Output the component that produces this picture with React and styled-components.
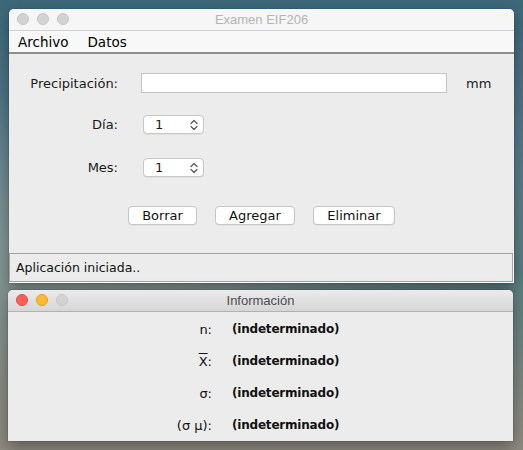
import React from "react";
import styled, { createGlobalStyle } from "styled-components";

const Global = createGlobalStyle`
  html, body { margin: 0; padding: 0; }
  body {
    width: 523px;
    height: 450px;
    overflow: hidden;
    font-family: "DejaVu Sans", "Liberation Sans", sans-serif;
    background:
      radial-gradient(ellipse at 10% 55%, rgba(150,165,160,0.55), rgba(150,165,160,0) 45%),
      radial-gradient(ellipse at 95% 60%, rgba(70,115,120,0.6), rgba(70,115,120,0) 40%),
      linear-gradient(180deg, #3d687a 0%, #54788a 30%, #6f8a8c 55%, #858a83 80%, #8e8a80 100%);
  }
`;

const Desktop = styled.div`
  padding-top: 9px;
`;

const Window = styled.div`
  margin-left: ${p => p.$left}px;
  margin-top: ${p => p.$top || 0}px;
  width: ${p => p.$width}px;
  background: #ececec;
  border-radius: 5px 5px 0 0;
  box-shadow: 0 6px 16px rgba(0, 0, 0, 0.35), 0 0 0 1px rgba(0, 0, 0, 0.08);
  overflow: hidden;
`;

const TitleBar = styled.div`
  position: relative;
  height: 21px;
  display: flex;
  align-items: center;
  justify-content: center;
  background: ${p => (p.$active ? "linear-gradient(#ebebeb, #d6d6d6)" : "#f6f6f6")};
  border-bottom: 1px solid ${p => (p.$active ? "#b1b1b1" : "#d1d1d1")};
  font-family: "Liberation Sans", sans-serif;
  font-size: 13px;
  color: ${p => (p.$active ? "#4d4d4d" : "#b4b4b4")};
`;

const Lights = styled.div`
  position: absolute;
  left: 8px;
  top: 4px;
  display: flex;
  gap: 8px;
`;

const Light = styled.span`
  width: 12px;
  height: 12px;
  box-sizing: border-box;
  border-radius: 50%;
  background: ${p => p.$color};
  border: 1px solid ${p => p.$edge};
`;

const MenuBar = styled.div`
  height: 21px;
  display: flex;
  align-items: center;
  gap: 19px;
  padding-left: 9px;
  background: #f8f8f8;
  border-bottom: 2px solid #8e8e8e;
  font-size: 13.5px;
  color: #000;
`;

const Form = styled.div`
  display: flex;
  flex-direction: column;
  padding-top: 19px;
  height: 180px;
`;

const Row = styled.div`
  display: grid;
  grid-template-columns: 109px max-content max-content;
  justify-content: start;
  column-gap: 23px;
  align-items: center;
  margin-top: ${p => p.$top || 0}px;
  font-size: 13px;
  color: #1a1a1a;
`;

const Label = styled.span`
  text-align: right;
`;

const TextField = styled.div`
  width: 306px;
  height: 20px;
  box-sizing: border-box;
  background: #fff;
  border: 1px solid #c3c3c3;
`;

const Unit = styled.span`
  margin-left: -4px;
`;

const Spinner = styled.div`
  margin-left: 2px;
  width: 61px;
  height: 19px;
  box-sizing: border-box;
  display: flex;
  align-items: center;
  justify-content: space-between;
  padding: 0 5px 0 11px;
  background: #fff;
  border: 1px solid #c8c8c8;
  border-radius: 4px;
  box-shadow: 0 0.5px 0 rgba(0, 0, 0, 0.1);
  font-size: 13px;
`;

const Buttons = styled.div`
  display: flex;
  gap: 18px;
  margin-top: 29px;
  padding-left: 119px;
`;

const Button = styled.div`
  width: ${p => p.$w}px;
  height: 19px;
  box-sizing: border-box;
  display: flex;
  align-items: center;
  justify-content: center;
  background: #fff;
  border: 1px solid #c6c6c6;
  border-radius: 4px;
  box-shadow: 0 0.5px 0 rgba(0, 0, 0, 0.08);
  font-size: 13px;
  color: #111;
`;

const StatusBar = styled.div`
  height: 29px;
  margin: 0 1px 1px 0;
  box-sizing: border-box;
  display: flex;
  align-items: center;
  padding-left: 6px;
  border: 1px solid #a3a3a3;
  box-shadow: 1px 1px 0 #fff;
  font-size: 12.5px;
  color: #111;
`;

const InfoBody = styled.div`
  padding-top: 1px;
  display: flex;
  flex-direction: column;
`;

const InfoRow = styled.div`
  height: 32px;
  display: grid;
  grid-template-columns: 204px auto;
  column-gap: 20px;
  align-items: center;
  font-size: 13px;
  color: #111;
`;

const InfoValue = styled.span`
  font-weight: bold;
  font-size: 12px;
  letter-spacing: -0.2px;
`;

const Bar = styled.span`
  text-decoration: overline;
`;

const UpDown = () => (
  <svg width="8" height="12" viewBox="0 0 8 12" fill="none" stroke="#555" strokeWidth="1.2" strokeLinecap="round" strokeLinejoin="round">
    <path d="M1 4.5 L4 1.5 L7 4.5" />
    <path d="M1 7.5 L4 10.5 L7 7.5" />
  </svg>
);

const stats = [
  { label: "n:" },
  { label: <><Bar>X</Bar>:</> },
  { label: "σ:" },
  { label: "(σ μ):" },
];

export default function App() {
  return (
    <>
      <Global />
      <Desktop>
        <Window $left={9} $width={505}>
          <TitleBar>
            <Lights>
              <Light $color="#d3d3d3" $edge="#c6c6c6" />
              <Light $color="#d3d3d3" $edge="#c6c6c6" />
              <Light $color="#d3d3d3" $edge="#c6c6c6" />
            </Lights>
            Examen EIF206
          </TitleBar>
          <MenuBar>
            <span>Archivo</span>
            <span>Datos</span>
          </MenuBar>
          <Form>
            <Row>
              <Label>Precipitación:</Label>
              <TextField />
              <Unit>mm</Unit>
            </Row>
            <Row $top={22}>
              <Label>Día:</Label>
              <Spinner>1<UpDown /></Spinner>
            </Row>
            <Row $top={24}>
              <Label>Mes:</Label>
              <Spinner>1<UpDown /></Spinner>
            </Row>
            <Buttons>
              <Button $w={69}>Borrar</Button>
              <Button $w={80}>Agregar</Button>
              <Button $w={82}>Eliminar</Button>
            </Buttons>
          </Form>
          <StatusBar>Aplicación iniciada..</StatusBar>
        </Window>
        <Window $left={8} $top={7} $width={505}>
          <TitleBar $active>
            <Lights>
              <Light $color="#fc5f57" $edge="#de4a43" />
              <Light $color="#fdbc2e" $edge="#de9e2a" />
              <Light $color="#d3d3d3" $edge="#c6c6c6" />
            </Lights>
            Información
          </TitleBar>
          <InfoBody>
            {stats.map((s, i) => (
              <InfoRow key={i}>
                <Label>{s.label}</Label>
                <InfoValue>(indeterminado)</InfoValue>
              </InfoRow>
            ))}
          </InfoBody>
        </Window>
      </Desktop>
    </>
  );
}
